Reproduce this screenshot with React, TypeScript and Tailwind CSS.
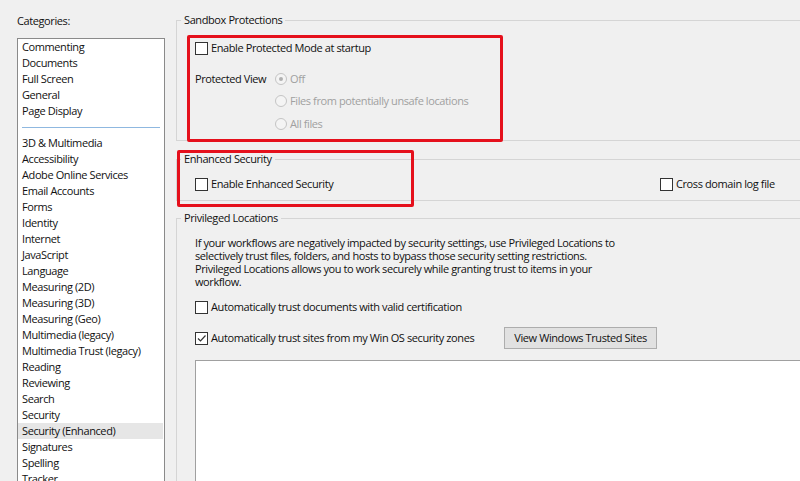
import * as React from "react"

const CATEGORIES_TOP = ["Commenting", "Documents", "Full Screen", "General", "Page Display"]
const CATEGORIES = [
  "3D & Multimedia",
  "Accessibility",
  "Adobe Online Services",
  "Email Accounts",
  "Forms",
  "Identity",
  "Internet",
  "JavaScript",
  "Language",
  "Measuring (2D)",
  "Measuring (3D)",
  "Measuring (Geo)",
  "Multimedia (legacy)",
  "Multimedia Trust (legacy)",
  "Reading",
  "Reviewing",
  "Search",
  "Security",
  "Security (Enhanced)",
  "Signatures",
  "Spelling",
  "Tracker",
]

function Checkbox({ label, checked = false }: { label: string; checked?: boolean }) {
  return (
    <div className="flex h-4 items-center gap-[3px]">
      <span className="flex h-[13px] w-[13px] shrink-0 items-center justify-center border border-[#333333] bg-white">
        {checked && (
          <svg viewBox="0 0 11 11" className="h-[11px] w-[11px]">
            <path d="M2 5.5 L4.5 8 L9.5 2.5" fill="none" stroke="#333333" strokeWidth="1.2" />
          </svg>
        )}
      </span>
      <span className="whitespace-nowrap">{label}</span>
    </div>
  )
}

function Radio({ label, selected = false }: { label: string; selected?: boolean }) {
  return (
    <div className="flex h-4 items-center gap-[3px] text-[#a0a0a0]">
      <span className="flex h-[12px] w-[12px] shrink-0 items-center justify-center rounded-full border border-[#c4c4c4] bg-[#f4f4f4]">
        {selected && <span className="h-[4px] w-[4px] rounded-full bg-[#b0b0b0]" />}
      </span>
      <span className="whitespace-nowrap">{label}</span>
    </div>
  )
}

function GroupBox({
  title,
  className,
  children,
}: {
  title: string
  className?: string
  children: React.ReactNode
}) {
  return (
    <fieldset className={`w-[640px] border border-[#d5d5d5] p-0 ${className ?? ""}`}>
      <legend className="ml-[4px] px-[3px] leading-4">{title}</legend>
      {children}
    </fieldset>
  )
}

export default function App() {
  return (
    <div className="relative flex h-[481px] w-[800px] overflow-hidden bg-[#f0f0f0] text-[11px] leading-4 tracking-[-0.4px] text-[#111111] [font-family:'Open_Sans',sans-serif]">
      {/* Categories */}
      <div className="w-[176px] shrink-0 pl-[17px] pt-[13px]">
        <div className="h-4">Categories:</div>
        <div className="mt-[9px] h-[600px] w-[148px] border border-[#8a8a8a] bg-white">
          {CATEGORIES_TOP.map((c) => (
            <div key={c} className="h-4 px-[4px] whitespace-nowrap">
              {c}
            </div>
          ))}
          <div className="mx-[4px] mb-[7px] mt-[8px] h-px bg-[#8fb8e0]" />
          {CATEGORIES.map((c) => (
            <div
              key={c}
              className={`h-4 px-[4px] whitespace-nowrap ${c === "Security (Enhanced)" ? "mr-px bg-[#e6e6e6]" : ""}`}
            >
              {c}
            </div>
          ))}
        </div>
      </div>

      {/* Settings */}
      <div className="flex min-w-0 flex-1 flex-col">
        <GroupBox title="Sandbox Protections" className="mt-[12px] pb-[8px]">
          <div className="flex flex-col pl-[18px]">
            <div className="mt-[12px]">
              <Checkbox label="Enable Protected Mode at startup" />
            </div>
            <div className="mt-[15px] flex">
              <div className="h-4 w-[80px]">Protected View</div>
              <div className="flex flex-col">
                <Radio label="Off" selected />
                <div className="mt-[6px]">
                  <Radio label="Files from potentially unsafe locations" />
                </div>
                <div className="mt-[7px]">
                  <Radio label="All files" />
                </div>
              </div>
            </div>
          </div>
        </GroupBox>

        <GroupBox title="Enhanced Security" className="mt-[10px] pb-[8px]">
          <div className="mt-[9px] flex pl-[18px]">
            <div className="w-[465px]">
              <Checkbox label="Enable Enhanced Security" />
            </div>
            <Checkbox label="Cross domain log file" />
          </div>
        </GroupBox>

        <GroupBox title="Privileged Locations" className="mt-[9px] h-[300px]">
          <div className="flex flex-col pl-[18px]">
            <p className="mt-[10px] whitespace-nowrap leading-[13px]">
              If your workflows are negatively impacted by security settings, use Privileged Locations to
              <br />
              selectively trust files, folders, and hosts to bypass those security setting restrictions.
              <br />
              Privileged Locations allows you to work securely while granting trust to items in your
              <br />
              workflow.
            </p>
            <div className="mt-[11px]">
              <Checkbox label="Automatically trust documents with valid certification" />
            </div>
            <div className="mt-[12px] flex h-[22px] items-center">
              <div className="w-[309px]">
                <Checkbox label="Automatically trust sites from my Win OS security zones" checked />
              </div>
              <button className="flex h-[22px] w-[153px] items-center justify-center border border-[#adadad] bg-[#e1e1e1]">
                View Windows Trusted Sites
              </button>
            </div>
            <div className="mt-[11px] h-[200px] border-l border-t border-[#a0a0a0] bg-white" />
          </div>
        </GroupBox>
      </div>

      {/* Annotation boxes */}
      <div className="pointer-events-none absolute left-[187px] top-[35px] h-[107px] w-[316px] rounded-[2px] border-[3px] border-[#e5101c]" />
      <div className="pointer-events-none absolute left-[177px] top-[150px] h-[57px] w-[237px] rounded-[2px] border-[3px] border-[#e5101c]" />
    </div>
  )
}
